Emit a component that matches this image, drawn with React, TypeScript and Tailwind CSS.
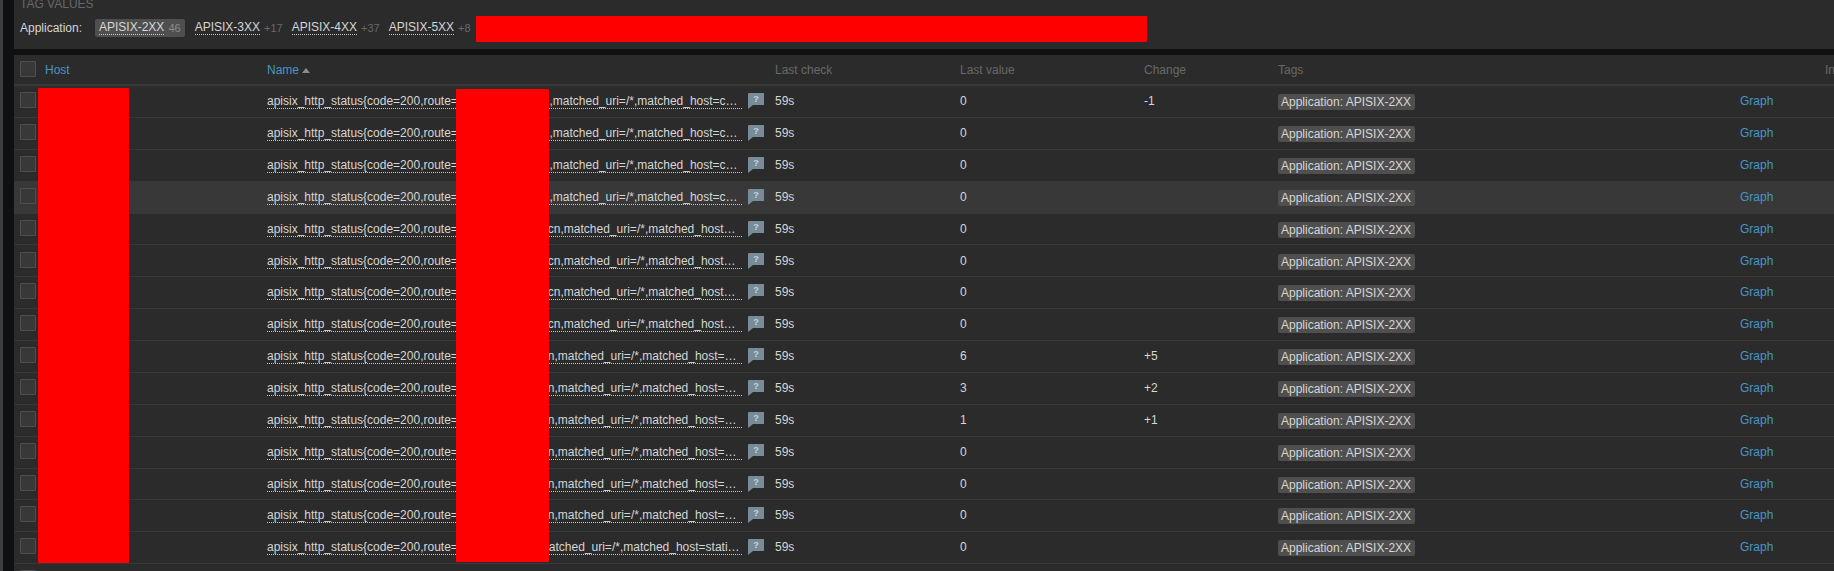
import { FC } from 'react';

type Row = { gap: string; tail: string; value: string; change?: string; hover?: boolean };

const GRID = 'grid grid-cols-[31px_222px_508px_185px_184px_134px_462px_85px_1fr] items-center';

const rows: Row[] = [
  { gap: 'w-[85px]', tail: 'n,matched_uri=/*,matched_host=cache.example.cn', value: '0', change: '-1' },
  { gap: 'w-[85px]', tail: 'n,matched_uri=/*,matched_host=cache.example.cn', value: '0' },
  { gap: 'w-[85px]', tail: 'n,matched_uri=/*,matched_host=cache.example.cn', value: '0' },
  { gap: 'w-[85px]', tail: 'n,matched_uri=/*,matched_host=cache.example.cn', value: '0', hover: true },
  { gap: 'w-[90px]', tail: 'cn,matched_uri=/*,matched_host=static.example.cn', value: '0' },
  { gap: 'w-[90px]', tail: 'cn,matched_uri=/*,matched_host=static.example.cn', value: '0' },
  { gap: 'w-[90px]', tail: 'cn,matched_uri=/*,matched_host=static.example.cn', value: '0' },
  { gap: 'w-[90px]', tail: 'cn,matched_uri=/*,matched_host=static.example.cn', value: '0' },
  { gap: 'w-[90px]', tail: 'n,matched_uri=/*,matched_host=static.example.cn', value: '6', change: '+5' },
  { gap: 'w-[90px]', tail: 'n,matched_uri=/*,matched_host=static.example.cn', value: '3', change: '+2' },
  { gap: 'w-[90px]', tail: 'n,matched_uri=/*,matched_host=static.example.cn', value: '1', change: '+1' },
  { gap: 'w-[90px]', tail: 'n,matched_uri=/*,matched_host=static.example.cn', value: '0' },
  { gap: 'w-[90px]', tail: 'n,matched_uri=/*,matched_host=static.example.cn', value: '0' },
  { gap: 'w-[90px]', tail: 'n,matched_uri=/*,matched_host=static.example.cn', value: '0' },
  { gap: 'w-[91px]', tail: 'atched_uri=/*,matched_host=static.example.cn', value: '0' },
  { gap: 'w-[91px]', tail: 'atched_uri=/*,matched_host=static.example.cn', value: '0' },
];

const filters = [
  { name: 'APISIX-2XX', count: '46', active: true },
  { name: 'APISIX-3XX', count: '+17' },
  { name: 'APISIX-4XX', count: '+37' },
  { name: 'APISIX-5XX', count: '+8' },
];

const Checkbox: FC = () => (
  <span className="mb-[2px] ml-[6px] block h-4 w-4 rounded-[1px] border border-[#4f4f4f] bg-[#383838]" />
);

const HintIcon: FC = () => (
  <svg width="16" height="16" viewBox="0 0 16 16" className="block shrink-0">
    <path d="M1 0H15.5a.5.5 0 0 1 .5.5V11.5a.5.5 0 0 1-.5.5H5L0 16V1a1 1 0 0 1 1-1Z" fill="#768d99" />
    <text x="8" y="9" textAnchor="middle" fontSize="9" fontWeight="700" fill="#c9d3d8">
      ?
    </text>
  </svg>
);

const ItemRow: FC<{ row: Row }> = ({ row }) => (
  <div className={`${GRID} h-[31.86px] border-b border-[#383838] pb-[0.72px] ${row.hover ? 'bg-[#383838]' : ''}`}>
    <Checkbox />
    <span />
    <div className="flex items-center">
      <span className="h-4 w-[475px] truncate border-b border-dotted border-[#c4c4c4] leading-4">
        apisix_http_status{'{'}code=200,route=
        <span className={`inline-block ${row.gap}`} />
        {row.tail}
      </span>
      <span className="ml-[6px]">
        <HintIcon />
      </span>
    </div>
    <span>59s</span>
    <span>{row.value}</span>
    <span>{row.change}</span>
    <span className="mt-[2px] w-fit rounded-[2px] bg-[#4f4f4f] pr-[4px] pl-[3px] leading-[16px]">
      Application: APISIX-2XX
    </span>
    <a className="text-[#4796c4]">Graph</a>
    <span />
  </div>
);

const App: FC = () => (
  <div className="relative flex h-[571px] w-[1834px] overflow-hidden bg-[#0e1012] font-['Liberation_Sans',Arial,sans-serif] text-xs text-[#d6d6d6]">
    <div className="w-[3px] shrink-0 bg-[#3e3e3e]" />
    <main className="ml-[11px] flex min-w-0 flex-1 flex-col">
      <section className="h-[49px] shrink-0 bg-[#2b2b2b] pl-[6px]">
        <h4 className="-mt-[3px] leading-[14px] text-[#686868] uppercase">Tag values</h4>
        <div className="mt-[8px] flex h-[18px] items-center">
          <span className="w-[75px]">Application:</span>
          {filters.map((f) => (
            <span
              key={f.name}
              className={`flex h-[18px] items-center rounded-[2px] px-[4px] ${
                f.active ? 'mr-[6px] bg-[#4f4f4f]' : 'mr-[1px]'
              }`}
            >
              <span className="border-b border-dotted border-[#c4c4c4] leading-[13px]">{f.name}</span>
              <span className={`ml-[4px] text-[11px] ${f.active ? 'text-[#8c8c8c]' : 'text-[#686868]'}`}>
                {f.count}
              </span>
            </span>
          ))}
        </div>
      </section>
      <section className="mt-[6px] flex-1 bg-[#2b2b2b]">
        <div className={`${GRID} h-[31.2px] border-b-2 border-[#383838] text-[#686868]`}>
          <Checkbox />
          <a className="text-[#4796c4]">Host</a>
          <span className="flex items-center gap-[3px]">
            <a className="text-[#4796c4]">Name</a>
            <svg width="8" height="5" viewBox="0 0 8 5" className="mt-[1px]">
              <path d="M4 0 8 5H0Z" fill="#8a8a8a" />
            </svg>
          </span>
          <span>Last check</span>
          <span>Last value</span>
          <span>Change</span>
          <span>Tags</span>
          <span />
          <span>Info</span>
        </div>
        {rows.map((row, i) => (
          <ItemRow key={i} row={row} />
        ))}
      </section>
    </main>
    <div className="absolute top-[16px] left-[476px] h-[26px] w-[671px] rounded-[1px] bg-[#ff0000]" />
    <div className="absolute top-[88px] left-[38px] h-[475px] w-[91px] rounded-[1px] bg-[#ff0000]" />
    <div className="absolute top-[89px] left-[456px] h-[473px] w-[93px] rounded-[1px] bg-[#ff0000]" />
  </div>
);

export default App;
